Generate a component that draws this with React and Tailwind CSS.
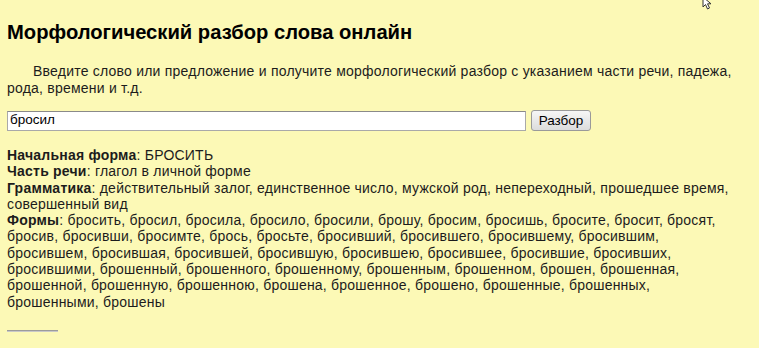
import React from "react";

const forms =
  "бросить, бросил, бросила, бросило, бросили, брошу, бросим, бросишь, бросите, бросит, бросят, бросив, бросивши, бросимте, брось, бросьте, бросивший, бросившего, бросившему, бросившим, бросившем, бросившая, бросившей, бросившую, бросившею, бросившее, бросившие, бросивших, бросившими, брошенный, брошенного, брошенному, брошенным, брошенном, брошен, брошенная, брошенной, брошенную, брошенною, брошена, брошенное, брошено, брошенные, брошенных, брошенными, брошены";

export default function App() {
  return (
    <div className="relative min-h-[348px] bg-[#fcf9b6] pl-[7px] pr-[24px] font-['Liberation_Sans',Arial,sans-serif] text-[#1c1c1c]">
      {/* mouse pointer from the screenshot */}
      <svg
        className="absolute left-[702px] top-[-4px]"
        width="12"
        height="14"
        viewBox="0 0 12 14"
      >
        <path
          d="M1 1 L1 11 L3.5 8.5 L5.5 13 L7.5 12 L5.5 7.8 L9 7.8 Z"
          fill="#fff"
          stroke="#333"
          strokeWidth="1"
        />
      </svg>

      <h1 className="pt-[21px] text-[20.2px] font-bold leading-[23px] text-black">
        Морфологический разбор слова онлайн
      </h1>

      <p className="mt-[19px] text-[14px] leading-[16.5px] tracking-[0.22px] indent-[26px]">
        Введите слово или предложение и получите морфологический разбор с
        указанием части речи, падежа, рода, времени и т.д.
      </p>

      <form
        className="mt-[14px] flex items-center gap-[5px]"
        onSubmit={(e) => e.preventDefault()}
      >
        <input
          type="text"
          defaultValue="бросил"
          className="h-[20px] w-[519px] shrink-0 border border-[#a9a9a9] border-t-[#8a8a8a] bg-white px-[2px] text-[13.5px] text-black outline-none"
        />
        <button
          type="submit"
          className="h-[21px] w-[60px] shrink-0 rounded-[3px] border border-[#9a9a9a] bg-gradient-to-b from-[#f6f6f6] to-[#dcdcdc] text-[13.5px] text-black"
        >
          Разбор
        </button>
      </form>

      <div className="mt-[16px] text-[14px] leading-[16.3px] tracking-[0.22px]">
        <div>
          <b>Начальная форма</b>: БРОСИТЬ
        </div>
        <div>
          <b>Часть речи</b>: глагол в личной форме
        </div>
        <div>
          <b>Грамматика</b>: действительный залог, единственное число, мужской
          род, непереходный, прошедшее время, совершенный вид
        </div>
        <div>
          <b>Формы</b>: {forms}
        </div>
      </div>

      <div className="mt-[20px] h-[2px] w-[51px] border-t border-[#9c9c9c] bg-[#c8c8c8]" />
    </div>
  );
}
